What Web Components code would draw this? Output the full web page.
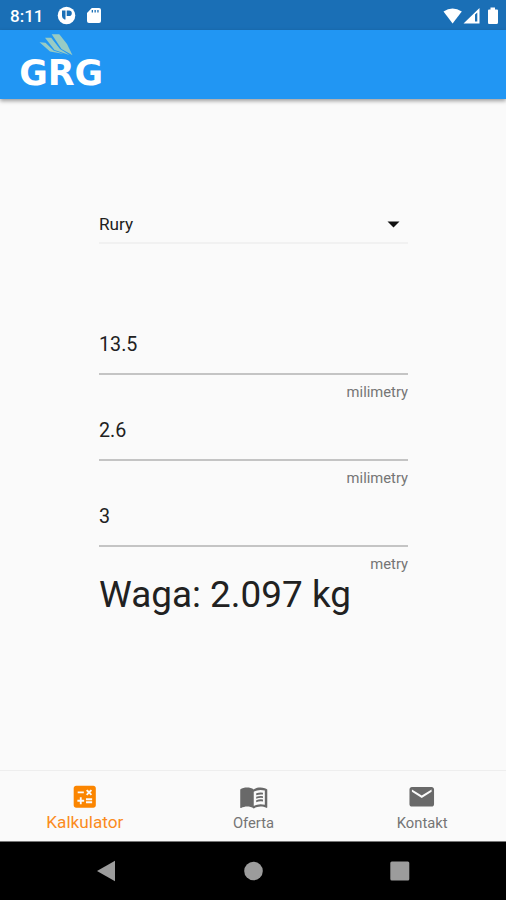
<!DOCTYPE html>
<html lang="pl">
<head>
<meta charset="utf-8">
<meta name="viewport" content="width=device-width, initial-scale=1">
<title>GRG Kalkulator</title>
<style>
  body {
    margin: 0;
    font-family: Roboto, "Liberation Sans", sans-serif;
    color: #212121;
  }
</style>
</head>
<body>
<grg-app></grg-app>
<script>
class StatusBar extends HTMLElement {
  constructor() {
    super()
    this.attachShadow({ mode: 'open' })
  }

  connectedCallback() {
    this.shadowRoot.innerHTML = `
      <style>
        :host {
          display: flex;
          box-sizing: border-box;
          height: 30px;
          padding: 1px 7px 0 10px;
          align-items: center;
          justify-content: space-between;
          background: #1a6fb6;
          color: white;
          font-size: 17px;
          font-weight: 500;
        }
        div { display: flex; align-items: center; }
        .time { width: 47px; }
        svg { display: block; fill: white; }
      </style>
      <div>
        <span class="time">8:11</span>
        <svg width="19" height="19" viewBox="0 0 19 19">
          <circle cx="9.5" cy="9.5" r="8.8"/>
          <path d="M5 4.500h3.500v9H7.500Q5 12.500 5 10zM9.700 4.500h2.300a2.800 2.800 0 0 1 0 5.600H9.700z" fill="#1a6fb6"/>
        </svg>
        <svg width="14" height="17" viewBox="0 0 14 17" style="margin-left:11px">
          <path d="M4.8 1H12q2 0 2 2v11q0 2-2 2H2q-2 0-2-2V6z"/>
          <path d="M4.7 3h1.300v2.500H4.700zM7.500 3h1.300v2.500H7.500zM10.300 3h1.300v2.500h-1.300z" fill="#1a6fb6"/>
        </svg>
      </div>
      <div>
        <svg width="56" height="20" viewBox="0 0 56 20">
          <path d="M.5 5.500Q9.500-.500 18.800 5.500L9.600 17.500z"/>
          <path fill-rule="evenodd" d="M20.500 17.500 36.500 2v15.500zM32 8.500v7h2.300v-9z"/>
          <path d="M47.500 1.500h4.500v2h2q1 0 1 1v12q0 1.500-1.500 1.500h-7.500Q45 18 45 16.500v-12q0-1 1-1h1.500z"/>
        </svg>
      </div>
    `
  }
}

class AppHeader extends HTMLElement {
  constructor() {
    super()
    this.attachShadow({ mode: 'open' })
  }

  connectedCallback() {
    this.shadowRoot.innerHTML = `
      <style>
        :host {
          display: block;
          box-sizing: border-box;
          height: 69px;
          padding-left: 15px;
          background: #2196f3;
          box-shadow: 0 2px 4px rgba(0,0,0,.38);
        }
        svg { display: block; overflow: visible; }
        text {
          font: bold 35px "DejaVu Sans", sans-serif;
          fill: white;
        }
      </style>
      <svg width="100" height="69" viewBox="0 0 100 69" role="img" aria-label="GRG">
        <g fill="#98cbc4">
          <path d="M36.700 4.300H44.300L52 14 57.500 25.300 46.500 19z"/>
          <path d="M30 7.700H36.200L45 19 54.500 25 39.500 20z"/>
          <path d="M24.500 12.300 30.500 12.800 38.500 20.500 49 24 35 21.500z"/>
        </g>
        <text y="54.500" textLength="84" x="4.200" lengthAdjust="spacingAndGlyphs">GRG</text>
      </svg>
    `
  }
}

class SelectField extends HTMLElement {
  constructor() {
    super()
    this.attachShadow({ mode: 'open' })
  }

  connectedCallback() {
    this.shadowRoot.innerHTML = `
      <style>
        :host {
          display: flex;
          box-sizing: border-box;
          height: 40px;
          padding: 2px 8px 0 0;
          align-items: center;
          justify-content: space-between;
          border-bottom: 2px solid #f1f1f1;
          font-size: 17.2px;
        }
      </style>
      <slot></slot>
      <svg width="13" height="7" viewBox="0 0 13 7"><path d="M.500.500h12l-6 6z" fill="#111"/></svg>
    `
  }
}

class NumberField extends HTMLElement {
  constructor() {
    super()
    this.attachShadow({ mode: 'open' })
  }

  connectedCallback() {
    this.shadowRoot.innerHTML = `
      <style>
        :host { display: block; height: 86px; }
        .value {
          box-sizing: border-box;
          height: 59px;
          line-height: 58px;
          border-bottom: 2px solid #c4c4c4;
          font-size: 19.7px;
        }
        .unit {
          margin-top: 7px;
          line-height: 20px;
          text-align: right;
          font-size: 14.76px;
          color: #757575;
        }
      </style>
      <div class="value"><slot></slot></div>
      <div class="unit">${this.getAttribute('unit')}</div>
    `
  }
}

class NavTab extends HTMLElement {
  constructor() {
    super()
    this.attachShadow({ mode: 'open' })
  }

  connectedCallback() {
    const icons = {
      calculate: '<path fill-rule="evenodd" d="M19 3H5c-1.100 0-2 .900-2 2v14c0 1.100.900 2 2 2h14c1.100 0 2-.900 2-2V5c0-1.100-.900-2-2-2zM13.030 7.060 14.090 6l1.410 1.410L16.910 6l1.060 1.060-1.410 1.410 1.410 1.410-1.060 1.060-1.410-1.400-1.410 1.410-1.060-1.060 1.410-1.410zM6.250 7.720h5v1.500h-5zM11.500 16h-2v2H8v-2H6v-1.500h2v-2h1.500v2h2zM18 17.250h-5v-1.500h5zM18 14.750h-5v-1.500h5z"/>',
      book: '<path d="M21 5c-1.110-.350-2.330-.500-3.500-.500-1.950 0-4.050.400-5.500 1.500-1.450-1.100-3.550-1.500-5.500-1.500S2.450 4.900 1 6v14.650c0 .250.250.500.500.500.100 0 .150-.050.250-.050C3.100 20.450 5.050 20 6.500 20c1.950 0 4.050.400 5.500 1.500 1.350-.850 3.800-1.500 5.500-1.500 1.650 0 3.350.300 4.750 1.050.100.050.150.050.250.050.250 0 .500-.250.500-.500V6c-.600-.450-1.250-.750-2-1zm0 13.500c-1.100-.350-2.300-.500-3.500-.500-1.700 0-4.150.650-5.500 1.500V8c1.350-.850 3.800-1.500 5.500-1.500 1.200 0 2.400.150 3.500.500z"/><path d="M14 9.200q3-1 5.500-.5V10.200q-3-.4-5.500.6zM14 12q3-1 5.500-.5V13q-3-.4-5.500.6zM14 14.800q3-1 5.500-.5V15.800q-3-.4-5.500.6z"/>',
      mail: '<path d="M20 4H4c-1.100 0-1.990.900-1.990 2L2 18c0 1.100.900 2 2 2h16c1.100 0 2-.900 2-2V6c0-1.100-.900-2-2-2zm0 4-8 5-8-5V6l8 5 8-5z"/>'
    }
    this.shadowRoot.innerHTML = `
      <style>
        :host {
          display: flex;
          flex: 1;
          flex-direction: column;
          align-items: center;
          padding: 11px 0 0 1px;
          color: #757575;
          font-size: 14.76px;
        }
        :host([active]) { color: #fb8c1e; font-size: 17.2px; }
        svg { display: block; fill: #696969; }
        :host([active]) svg { fill: #fb8500; }
        span { line-height: 23px; }
        :host([active]) span { margin-top: -1px; }
      </style>
      <svg width="29.5" height="29.5" viewBox="0 0 24 24">${icons[this.getAttribute('icon')]}</svg>
      <span><slot></slot></span>
    `
  }
}

class SystemNav extends HTMLElement {
  constructor() {
    super()
    this.attachShadow({ mode: 'open' })
  }

  connectedCallback() {
    this.shadowRoot.innerHTML = `
      <style>
        :host {
          display: flex;
          box-sizing: border-box;
          height: 59px;
          padding: 0 96px;
          align-items: center;
          justify-content: space-between;
          background: black;
          border-top: 1px solid #777;
        }
        svg { display: block; fill: #9c9c9c; }
      </style>
      <svg width="20" height="22" viewBox="0 0 20 22"><path d="M1 11 19 .800v20.400z"/></svg>
      <svg width="20" height="20" viewBox="0 0 20 20"><circle cx="10.500" cy="10" r="9.300"/></svg>
      <svg width="20" height="20" viewBox="0 0 20 20"><rect x=".3" y=".5" width="19" height="19" rx="1.500"/></svg>
    `
  }
}

class GrgApp extends HTMLElement {
  constructor() {
    super()
    this.attachShadow({ mode: 'open' })
  }

  connectedCallback() {
    this.shadowRoot.innerHTML = `
      <style>
        :host {
          display: flex;
          flex-direction: column;
          height: 900px;
          background: #fafafa;
        }
        main {
          flex: 1;
          padding: 105px 98px 0 99px;
        }
        .fields { margin-top: 72px; }
        .result {
          line-height: 42px;
          font-size: 36.9px;
          white-space: nowrap;
        }
        nav {
          display: flex;
          box-sizing: border-box;
          height: 71px;
          border-top: 1px solid #eee;
        }
      </style>
      <status-bar></status-bar>
      <app-header></app-header>
      <main>
        <select-field>Rury</select-field>
        <div class="fields">
          <number-field unit="milimetry">13.5</number-field>
          <number-field unit="milimetry">2.6</number-field>
          <number-field unit="metry">3</number-field>
        </div>
        <div class="result">Waga: 2.097 kg</div>
      </main>
      <nav>
        <nav-tab icon="calculate" active>Kalkulator</nav-tab>
        <nav-tab icon="book">Oferta</nav-tab>
        <nav-tab icon="mail">Kontakt</nav-tab>
      </nav>
      <system-nav></system-nav>
    `
  }
}

customElements.define('status-bar', StatusBar)
customElements.define('app-header', AppHeader)
customElements.define('select-field', SelectField)
customElements.define('number-field', NumberField)
customElements.define('nav-tab', NavTab)
customElements.define('system-nav', SystemNav)
customElements.define('grg-app', GrgApp)
</script>
</body>
</html>
